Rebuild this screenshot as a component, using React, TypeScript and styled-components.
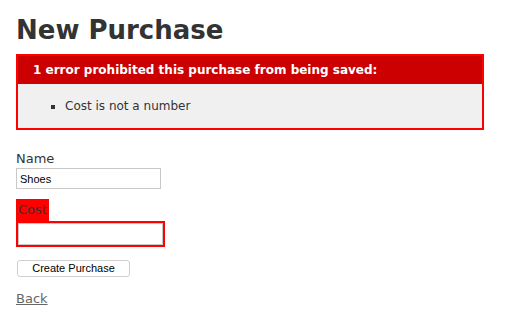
import React from "react";
import styled, { createGlobalStyle } from "styled-components";

const Global = createGlobalStyle`
  html, body { margin: 0; padding: 0; background: #fff; }
  body {
    color: #333;
    font-family: "DejaVu Sans", Verdana, sans-serif;
    font-size: 13px;
    line-height: 18px;
  }
`;

const Page = styled.div`
  padding: 11px 16px;
`;

const Title = styled.h1`
  margin: 0 0 5px;
  font-size: 26px;
  line-height: 38px;
  font-weight: bold;
  color: #333;
`;

const ErrorBox = styled.div`
  width: 450px;
  border: 2px solid #f00;
  padding: 7px 7px 0;
  margin-bottom: 20px;
  background: #f0f0f0;
`;

const ErrorHeader = styled.h2`
  margin: -7px -7px 0;
  padding: 5px 5px 5px 15px;
  font-size: 12px;
  line-height: 18px;
  font-weight: bold;
  text-align: left;
  background: #c00;
  color: #fff;
`;

const ErrorList = styled.ul`
  margin: 13px 0;
  padding-left: 40px;
`;

const ErrorItem = styled.li`
  font-size: 12px;
  list-style: square;
`;

const Field = styled.div`
  margin-bottom: 10px;
`;

const Label = styled.label`
  display: block;
  height: 18px;
  line-height: 18px;
`;

const ErrorWrap = styled.div`
  display: table;
  padding: 2px;
  background: #f00;
`;

const TextInput = styled.input<{ $tall?: boolean }>`
  box-sizing: border-box;
  width: 145px;
  height: ${(p) => (p.$tall ? "22px" : "21px")};
  margin: 0;
  padding: 1px 3px;
  border: 1px solid #c8c8c8;
  background: #fff;
  font-family: "Liberation Sans", Arial, sans-serif;
  font-size: 11px;
  color: #000;
  display: block;
`;

const Actions = styled.div`
  margin-bottom: 10px;
  padding-top: 3px;
`;

const Button = styled.button`
  box-sizing: border-box;
  height: 17px;
  width: 113px;
  margin: 0 0 0 1px;
  padding: 0;
  border: 1px solid #cfcfcf;
  border-radius: 3px;
  background: #fff;
  font-family: "Liberation Sans", Arial, sans-serif;
  font-size: 11px;
  line-height: 15px;
  color: #000;
  display: block;
`;

const BackLink = styled.a`
  display: inline-block;
  margin-top: 3px;
  color: #666;
  text-decoration: underline;
`;

export default function App() {
  return (
    <Page>
      <Global />
      <Title>New Purchase</Title>
      <form onSubmit={(e) => e.preventDefault()}>
        <ErrorBox>
          <ErrorHeader>1 error prohibited this purchase from being saved:</ErrorHeader>
          <ErrorList>
            <ErrorItem>Cost is not a number</ErrorItem>
          </ErrorList>
        </ErrorBox>
        <Field>
          <Label htmlFor="name">Name</Label>
          <TextInput id="name" type="text" defaultValue="Shoes" />
        </Field>
        <Field>
          <ErrorWrap>
            <Label htmlFor="cost">Cost</Label>
          </ErrorWrap>
          <ErrorWrap>
            <TextInput id="cost" type="text" $tall />
          </ErrorWrap>
        </Field>
        <Actions>
          <Button type="submit">Create Purchase</Button>
        </Actions>
      </form>
      <BackLink href="#">Back</BackLink>
    </Page>
  );
}
